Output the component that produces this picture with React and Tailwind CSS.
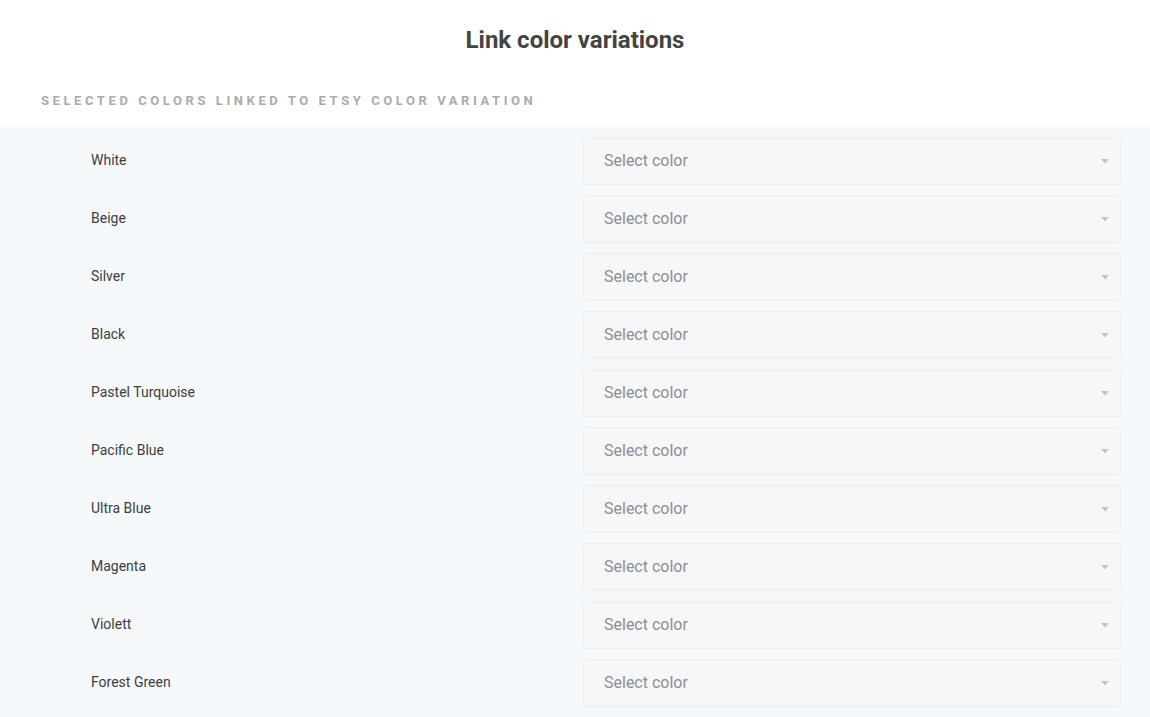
import React from "react";

const colors = [
  "White",
  "Beige",
  "Silver",
  "Black",
  "Pastel Turquoise",
  "Pacific Blue",
  "Ultra Blue",
  "Magenta",
  "Violett",
  "Forest Green",
];

export default function App() {
  return (
    <div className="w-[1150px] h-[717px] bg-white overflow-hidden" style={{ fontFamily: "Roboto, 'Liberation Sans', sans-serif" }}>
      <div className="pt-[25px] h-[56px] text-center">
        <h1 className="text-[24px] leading-[30px] font-bold text-[#444444]">Link color variations</h1>
      </div>
      <div className="pt-[36px] pb-[18px] pl-[41px]">
        <div className="text-[13px] leading-[17px] font-bold tracking-[0.275em] uppercase text-[#ababab]">
          Selected colors linked to Etsy color variation
        </div>
      </div>
      <div className="bg-[#f6f9fc] pt-[10px] pb-[10px] flex flex-col gap-[10px]">
        {colors.map((c) => (
          <div key={c} className="flex items-center justify-between pl-[91px] pr-[29px] h-[48px]">
            <span className="text-[14px] leading-[16px] text-[#3d3d3d] -mt-[2px]">{c}</span>
            <div className="w-[538px] h-[48px] rounded-[5px] border border-[#ececec] bg-[#f7f7f7] flex items-center justify-between pl-[20px] pr-[11px]">
              <span className="text-[16px] text-[#8b8e9b]">Select color</span>
              <svg width="8" height="5" viewBox="0 0 8 5">
                <path d="M0 0 L8 0 L4 4.5 Z" fill="#c4c4c4" />
              </svg>
            </div>
          </div>
        ))}
      </div>
    </div>
  );
}
